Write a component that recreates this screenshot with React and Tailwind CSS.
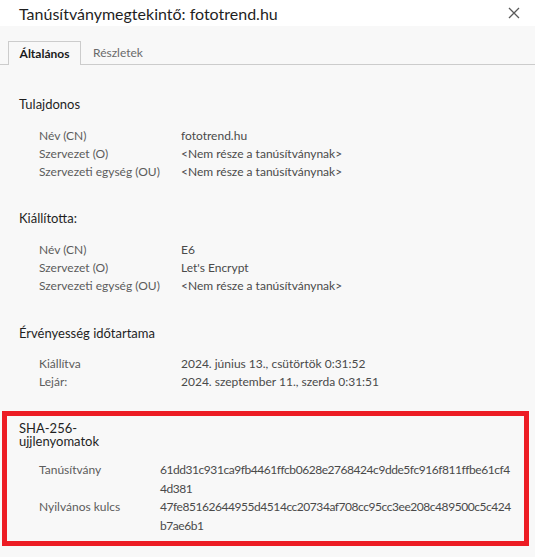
// App.jsx
const owner = [
    ["Név (CN)", "fototrend.hu"],
    ["Szervezet (O)", "<Nem része a tanúsítványnak>"],
    ["Szervezeti egység (OU)", "<Nem része a tanúsítványnak>"],
];

const issuer = [
    ["Név (CN)", "E6"],
    ["Szervezet (O)", "Let's Encrypt"],
    ["Szervezeti egység (OU)", "<Nem része a tanúsítványnak>"],
];

const validity = [
    ["Kiállítva", "2024. június 13., csütörtök 0:31:52"],
    ["Lejár:", "2024. szeptember 11., szerda 0:31:51"],
];

// hashes are split where the dialog wraps them
const fingerprints = [
    ["Tanúsítvány", ["61dd31c931ca9fb4461ffcb0628e2768424c9dde5fc916f811ffbe61cf4", "4d381"]],
    ["Nyilvános kulcs", ["47fe85162644955d4514cc20734af708cc95cc3ee208c489500c5c424", "b7ae6b1"]],
];

function Rows({ items }) {
    return (
        <div className="pl-[20px] text-[12px]">
            {items.map(([label, value]) => (
                <div key={label} className="flex leading-[18px]">
                    <span className="w-[142px] shrink-0 text-[#5c5c5c]">{label}</span>
                    <span className="text-[#4a4a4a]">{value}</span>
                </div>
            ))}
        </div>
    );
}

export default function App() {
    return (
        <div
            className="w-[535px] h-[557px] overflow-hidden bg-[#f8f8f8] text-[13px]"
            style={{ fontFamily: "Lato, 'Noto Sans', sans-serif" }}
        >
            {/* title bar */}
            <div className="h-[26px] bg-white flex items-center justify-between pl-[19px] pr-[14px]">
                <span className="text-[16px] text-[#1f1f1f] leading-none pt-[1px]">
                    Tanúsítványmegtekintő: fototrend.hu
                </span>
                <svg width="12" height="12" viewBox="0 0 12 12" className="mr-[1px]">
                    <path d="M1 1 L11 11 M11 1 L1 11" stroke="#5a5a5a" strokeWidth="1.3" fill="none" />
                </svg>
            </div>

            {/* tabs */}
            <div className="pt-[15px] border-b border-[#cccccc] flex pl-[8px] text-[12px]">
                <div className="h-[24px] w-[73px] border border-b-0 border-[#cccccc] bg-[#f8f8f8] -mb-[1px] flex items-center justify-center font-bold text-[#1a1a1a]">
                    Általános
                </div>
                <div className="h-[23px] pl-[12px] flex items-center text-[#6a6a6a]">Részletek</div>
            </div>

            <div className="pl-[19px] pr-[7px] pt-[30px]">
                <div className="leading-[18px] text-[#1f1f1f]">Tulajdonos</div>
                <div className="mt-[14px]">
                    <Rows items={owner} />
                </div>

                <div className="mt-[28px] leading-[18px] text-[#1f1f1f]">Kiállította:</div>
                <div className="mt-[14px]">
                    <Rows items={issuer} />
                </div>

                <div className="mt-[29px] leading-[18px] text-[#1f1f1f]">Érvényesség időtartama</div>
                <div className="mt-[13px]">
                    <Rows items={validity} />
                </div>
            </div>

            {/* highlighted fingerprint section */}
            <div className="ml-[2px] mt-[20px] w-[527px] h-[135px] border-[5px] border-[#ed1c24] pl-[12px] pt-[6px]">
                <div className="w-[100px] leading-[13px] text-[#1f1f1f]">SHA-256-ujjlenyomatok</div>
                <div className="mt-[13px] pl-[20px] text-[12px]">
                    {fingerprints.map(([label, lines]) => (
                        <div key={label} className="flex leading-[18.7px]">
                            <span className="w-[121px] shrink-0 text-[#5c5c5c]">{label}</span>
                            <span className="text-[#4a4a4a] tracking-[-0.45px]">
                                {lines.map((line) => (
                                    <div key={line}>{line}</div>
                                ))}
                            </span>
                        </div>
                    ))}
                </div>
            </div>
        </div>
    );
}
